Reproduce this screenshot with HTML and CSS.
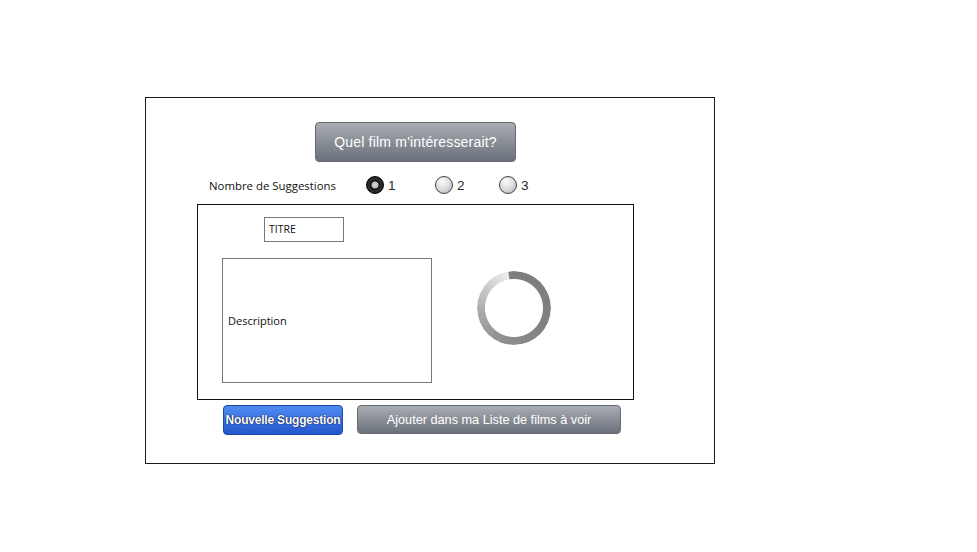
FILE: index.html
```html
<!DOCTYPE html>
<html lang="fr">
<head>
<meta charset="utf-8">
<title>Suggestion de film</title>
<link rel="stylesheet" href="styles.css">
</head>
<body>
<div class="frame">
  <div class="top-row">
    <button class="btn btn-grey btn-main">Quel film m'intéresserait?</button>
  </div>
  <div class="radio-row">
    <span class="radio-label">Nombre de Suggestions</span>
    <label class="radio radio-first"><span class="dot dot-on"></span><span class="num">1</span></label>
    <label class="radio"><span class="dot"></span><span class="num">2</span></label>
    <label class="radio"><span class="dot"></span><span class="num">3</span></label>
  </div>
  <div class="panel">
    <div class="panel-left">
      <div class="titre">TITRE</div>
      <div class="desc">Description</div>
    </div>
    <div class="spinner"></div>
  </div>
  <div class="actions">
    <button class="btn btn-blue">Nouvelle Suggestion</button>
    <button class="btn btn-grey btn-add">Ajouter dans ma Liste de films à voir</button>
  </div>
</div>
</body>
</html>
```

FILE: styles.css
```css
html, body {
  margin: 0;
  padding: 0;
  background: #fff;
}
body {
  font-family: "Liberation Sans", Arial, sans-serif;
}
.frame {
  box-sizing: border-box;
  width: 570px;
  height: 367px;
  margin: 97px 0 0 145px;
  border: 1px solid #1a1a1a;
  display: flex;
  flex-direction: column;
}
.top-row {
  padding: 24px 0 0 169px;
}
.btn {
  box-sizing: border-box;
  font-family: "Liberation Sans", Arial, sans-serif;
  color: #fff;
  border-radius: 4px;
  padding: 0;
  cursor: pointer;
}
.btn-grey {
  background: linear-gradient(#a9adb4, #868b93 55%, #6c727c);
  border: 1px solid #666b73;
}
.btn-main {
  width: 201px;
  height: 40px;
  font-size: 14px;
  letter-spacing: 0.2px;
}
.radio-row {
  display: flex;
  align-items: center;
  height: 22px;
  margin-top: 12px;
  padding-left: 63px;
}
.radio-label {
  font-family: "Open Sans", "Noto Sans", sans-serif;
  font-size: 11.4px;
  color: #111;
  width: 157px;
}
.radio {
  display: flex;
  align-items: center;
  width: 64px;
}
.radio-first {
  width: 69px;
}
.dot {
  box-sizing: border-box;
  width: 18px;
  height: 18px;
  border-radius: 50%;
  border: 1px solid #444;
  background: radial-gradient(circle at 40% 30%, #fdfdfd, #d4d4d4 60%, #a8a8a8);
}
.dot-on {
  border-color: #000;
  background: radial-gradient(circle, #d8d8d8 0, #bbb 3px, #111 4px, #333 7px, #000 9px);
}
.num {
  font-size: 13.5px;
  color: #2a2a2a;
  margin-left: 4px;
}
.panel {
  box-sizing: border-box;
  width: 437px;
  height: 196px;
  margin: 8px 0 0 51px;
  border: 1px solid #111;
  display: flex;
}
.panel-left {
  display: flex;
  flex-direction: column;
  padding: 12px 0 0 24px;
}
.titre {
  box-sizing: border-box;
  width: 80px;
  height: 25px;
  margin-left: 42px;
  border: 1px solid #777;
  font-family: "Open Sans", "Noto Sans", sans-serif;
  font-size: 10.5px;
  color: #111;
  padding: 4px 0 0 4px;
}
.desc {
  box-sizing: border-box;
  width: 210px;
  height: 125px;
  margin-top: 16px;
  border: 1px solid #777;
  font-family: "Open Sans", "Noto Sans", sans-serif;
  font-size: 11px;
  color: #111;
  display: flex;
  align-items: center;
  padding: 0 0 0 5px;
}
.spinner {
  width: 74px;
  height: 74px;
  margin: 66px 0 0 45px;
  border-radius: 50%;
  background: conic-gradient(from 0deg, #7e7e7e 0deg, #808080 120deg, #8f8f8f 200deg, #a8a8a8 260deg, #cdcdcd 310deg, #ededed 350deg, #7e7e7e 352deg);
  -webkit-mask: radial-gradient(circle, transparent 28.5px, #000 29.5px);
  mask: radial-gradient(circle, transparent 28.5px, #000 29.5px);
}
.actions {
  display: flex;
  align-items: flex-start;
  margin-top: 5px;
  padding-left: 77px;
  gap: 14px;
}
.btn-blue {
  width: 120px;
  height: 30px;
  font-size: 12px;
  font-weight: bold;
  border: 1px solid #1d47a6;
  background: linear-gradient(#4f8cf0, #3a70e0 50%, #2456cc);
  text-shadow: 0 0 1px #00113d, 0 0 1px #00113d;
  letter-spacing: -0.2px;
}
.btn-add {
  width: 264px;
  height: 29px;
  font-size: 12.7px;
}
```
